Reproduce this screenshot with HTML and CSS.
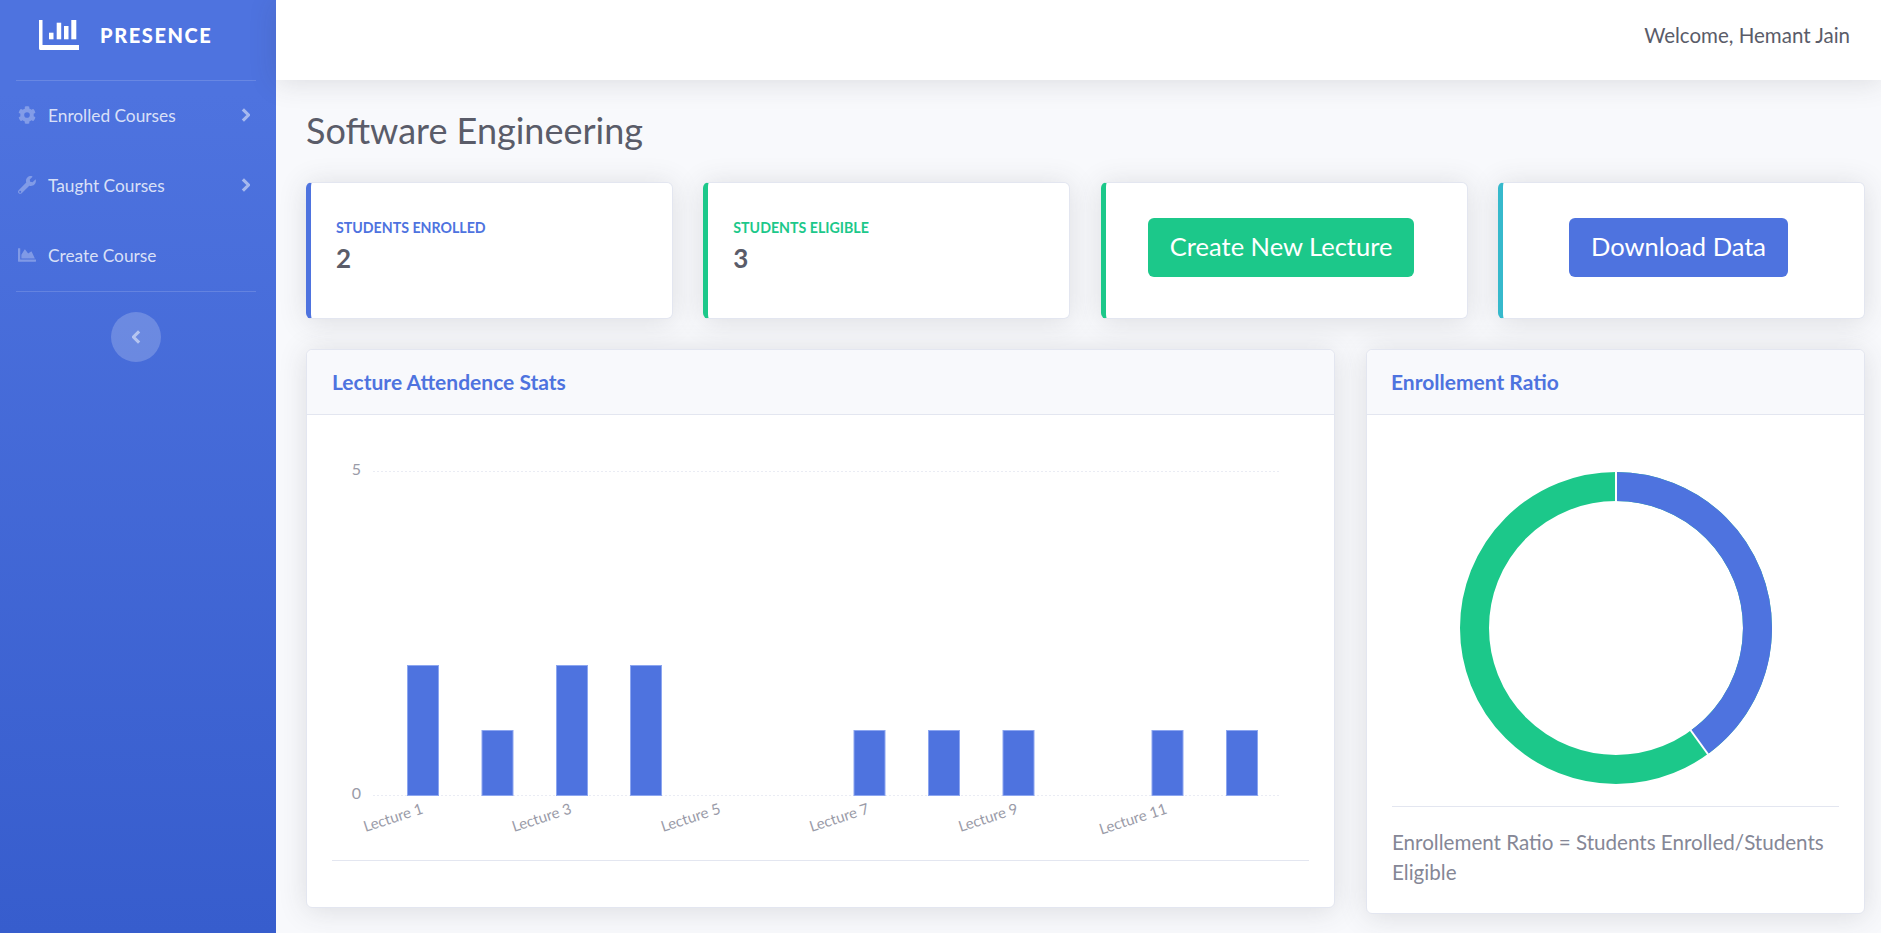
FILE: index.html
```html
<!DOCTYPE html>
<html lang="en">
<head>
    <meta charset="UTF-8">
    <title>Presence - Software Engineering</title>
    <link rel="stylesheet" href="styles.css">
</head>
<body>
<div class="wrapper">
    <aside class="sidebar">
        <a class="brand" href="#">
            <svg class="brand-icon" viewBox="0 0 40 30" width="40" height="30">
                <path fill="#fff" d="M0 0h3.5v25H40v5H1.5Q0 30 0 28.5z"/>
                <rect fill="#fff" x="10" y="12.7" width="4.5" height="6.6"/>
                <rect fill="#fff" x="17.7" y="2.7" width="4.5" height="16.6"/>
                <rect fill="#fff" x="25" y="6" width="4.5" height="13.3"/>
                <rect fill="#fff" x="32.3" y="0" width="5" height="19.3"/>
            </svg>
            <span class="brand-text">Presence</span>
        </a>
        <hr class="side-divider">
        <a class="side-link" href="#">
            <svg class="side-icon" viewBox="0 0 512 512"><path d="M487 316l-42-25c4-23 4-47 0-70l42-25c5-3 7-9 6-14-11-36-30-68-55-95-4-4-10-5-15-2l-42 24c-18-15-38-27-60-35V26c0-6-4-10-9-11-37-8-74-8-110 0-5 1-9 5-9 11v49c-22 8-42 20-60 35L91 86c-5-3-11-2-15 2-25 27-44 59-55 95-2 5 1 11 6 14l42 25c-4 23-4 47 0 70l-42 25c-5 3-7 9-6 14 11 36 30 68 55 95 4 4 10 5 15 2l42-24c18 15 38 27 60 35v49c0 6 4 10 9 11 37 8 74 8 110 0 5-1 9-5 9-11v-49c22-8 42-20 60-35l42 24c5 3 11 2 15-2 25-27 44-59 55-95 2-5-1-11-6-14zM256 336a80 80 0 110-160 80 80 0 010 160z"/></svg>
            <span class="side-label">Enrolled Courses</span>
            <svg class="side-caret" viewBox="0 0 10 16"><path d="M2 1.5L8.5 8 2 14.5" fill="none" stroke="currentColor" stroke-width="3.6"/></svg>
        </a>
        <a class="side-link" href="#">
            <svg class="side-icon" viewBox="0 0 512 512"><path d="M507 109c-2-9-13-12-20-5l-74 74-68-11-11-68 74-74c7-7 4-18-5-20-47-12-99 0-136 37-39 39-50 96-33 145L18 403c-24 24-24 63 0 87s63 24 87 0l216-216c49 17 106 6 145-33 37-37 49-90 41-132zM62 480a30 30 0 110-60 30 30 0 010 60z"/></svg>
            <span class="side-label">Taught Courses</span>
            <svg class="side-caret" viewBox="0 0 10 16"><path d="M2 1.5L8.5 8 2 14.5" fill="none" stroke="currentColor" stroke-width="3.6"/></svg>
        </a>
        <a class="side-link" href="#">
            <svg class="side-icon" viewBox="0 0 512 512"><path d="M500 384c6.6 0 12 5.4 12 12v40c0 6.6-5.4 12-12 12H12c-6.6 0-12-5.4-12-12V76c0-6.6 5.4-12 12-12h40c6.6 0 12 5.4 12 12v308h436zM372.7 159.5L288 216l-85.3-113.7c-5.1-6.8-15.5-6.3-19.9 1L96 248v104h384l-89.9-187.8c-3.2-6.5-11.4-8.7-17.4-4.7z"/></svg>
            <span class="side-label">Create Course</span>
        </a>
        <hr class="side-divider">
        <button class="side-toggle" type="button">
            <svg viewBox="0 0 10 16" width="9" height="14"><path d="M8 1.5L1.5 8 8 14.5" fill="none" stroke="currentColor" stroke-width="3.6"/></svg>
        </button>
    </aside>

    <div class="main">
        <header class="topbar">
            <span class="welcome">Welcome, Hemant Jain</span>
        </header>

        <div class="content">
            <h1 class="page-title">Software Engineering</h1>

            <div class="stat-row">
                <div class="card stat-card border-primary">
                    <div class="stat-label text-primary">Students Enrolled</div>
                    <div class="stat-value">2</div>
                </div>
                <div class="card stat-card border-success">
                    <div class="stat-label text-success">Students Eligible</div>
                    <div class="stat-value">3</div>
                </div>
                <div class="card action-card border-success">
                    <a class="btn btn-success" href="#">Create New Lecture</a>
                </div>
                <div class="card action-card border-info">
                    <a class="btn btn-primary" href="#">Download Data</a>
                </div>
            </div>

            <div class="chart-row">
                <div class="card chart-card">
                    <div class="card-head">Lecture Attendence Stats</div>
                    <div class="card-body">
                        <svg class="bar-chart" viewBox="0 0 1027 444" width="1027" height="444">
                            <g class="grid">
                                <line x1="66" y1="55.5" x2="972" y2="55.5"/>
                                <line x1="66" y1="379.5" x2="972" y2="379.5"/>
                            </g>
                            <g class="y-ticks">
                                <text x="54" y="59">5</text>
                                <text x="54" y="383">0</text>
                            </g>
                            <g class="bars">
                                <rect x="100.5" y="249.5" width="31" height="130"/>
                                <rect x="175" y="314.5" width="31" height="65"/>
                                <rect x="249.5" y="249.5" width="31" height="130"/>
                                <rect x="323.5" y="249.5" width="31" height="130"/>
                                <rect x="547" y="314.5" width="31" height="65"/>
                                <rect x="621.5" y="314.5" width="31" height="65"/>
                                <rect x="696" y="314.5" width="31" height="65"/>
                                <rect x="845" y="314.5" width="31" height="65"/>
                                <rect x="919.5" y="314.5" width="31" height="65"/>
                            </g>
                            <g class="x-ticks">
                                <text transform="translate(117 397) rotate(-18)">Lecture 1</text>
                                <text transform="translate(265.5 397) rotate(-18)">Lecture 3</text>
                                <text transform="translate(414.5 397) rotate(-18)">Lecture 5</text>
                                <text transform="translate(563 397) rotate(-18)">Lecture 7</text>
                                <text transform="translate(712 397) rotate(-18)">Lecture 9</text>
                                <text transform="translate(861 397) rotate(-18)">Lecture 11</text>
                            </g>
                        </svg>
                        <hr class="rule">
                    </div>
                </div>

                <div class="card ratio-card">
                    <div class="card-head">Enrollement Ratio</div>
                    <div class="card-body">
                        <svg class="donut" viewBox="0 0 320 320" width="320" height="320">
                            <circle class="ring-success" cx="160" cy="160" r="141.5" pathLength="100"/>
                            <circle class="ring-primary" cx="160" cy="160" r="141.5" pathLength="100" transform="rotate(-90 160 160)"/>
                            <line class="ring-gap" x1="160" y1="0" x2="160" y2="35"/>
                            <line class="ring-gap" x1="254" y1="289" x2="233" y2="260"/>
                        </svg>
                        <hr class="rule">
                        <p class="ratio-note">Enrollement Ratio = Students Enrolled/Students Eligible</p>
                    </div>
                </div>
            </div>
        </div>
    </div>
</div>
</body>
</html>
```

FILE: styles.css
```css
* {
    box-sizing: border-box;
}
html, body {
    height: 100%;
    margin: 0;
}
body {
    font-family: Lato, "Noto Sans", sans-serif;
    color: #858796;
    background-color: #f8f9fc;
}
a {
    text-decoration: none;
}
.wrapper {
    display: flex;
    height: 933px;
    overflow: hidden;
}

/* sidebar */
.sidebar {
    width: 276px;
    flex-shrink: 0;
    padding: 0 20px 0 16px;
    background: linear-gradient(180deg, #4e73df 10%, #375dcd 100%);
    display: flex;
    flex-direction: column;
}
.brand {
    height: 80px;
    display: flex;
    align-items: center;
    padding: 0 0 11px 23px;
    color: #fff;
}
.brand-icon {
    margin-right: 21px;
}
.brand-text {
    font-size: 20px;
    font-weight: 900;
    letter-spacing: 1.6px;
    text-transform: uppercase;
}
.side-divider {
    margin: 0;
    border: 0;
    border-top: 1px solid rgba(255, 255, 255, 0.15);
}
.side-link {
    height: 70px;
    padding-bottom: 2px;
    display: flex;
    align-items: center;
    color: rgba(255, 255, 255, 0.8);
    font-size: 17.3px;
}
.side-icon {
    width: 18px;
    height: 18px;
    margin-left: 2px;
    margin-right: 12px;
    fill: rgba(255, 255, 255, 0.3);
}
.side-label {
    flex-grow: 1;
}
.side-caret {
    width: 9px;
    height: 14px;
    margin-right: 6px;
    color: rgba(255, 255, 255, 0.5);
}
.side-toggle {
    width: 50px;
    height: 50px;
    margin: 20px 0 0 95px;
    padding: 0;
    border: 0;
    border-radius: 50%;
    color: rgba(255, 255, 255, 0.5);
    background-color: rgba(255, 255, 255, 0.2);
    display: flex;
    align-items: center;
    justify-content: center;
}

/* main column */
.main {
    flex-grow: 1;
    min-width: 0;
}
.topbar {
    height: 80px;
    padding: 0 31px 10px 0;
    display: flex;
    align-items: center;
    justify-content: flex-end;
    background-color: #fff;
    box-shadow: 0 2.4px 28px 0 rgba(58, 59, 69, 0.15);
    position: relative;
}
.welcome {
    font-size: 20.5px;
    color: #5a5c69;
}
.content {
    padding: 0 16px 0 30px;
}
.page-title {
    margin: 0;
    padding-top: 28px;
    height: 102px;
    font-size: 36px;
    line-height: 44px;
    font-weight: 400;
    color: #5a5c69;
}

/* cards */
.card {
    background-color: #fff;
    border: 1px solid #e3e6f0;
    border-radius: 6px;
    box-shadow: 0 2.4px 28px 0 rgba(58, 59, 69, 0.15);
}
.border-primary {
    border-left: 5px solid #4e73df;
}
.border-success {
    border-left: 5px solid #1cc88a;
}
.border-info {
    border-left: 5px solid #36b9cc;
}
.text-primary {
    color: #4e73df;
}
.text-success {
    color: #1cc88a;
}
.stat-row {
    display: grid;
    grid-template-columns: repeat(4, 367px);
    justify-content: space-between;
}
.stat-card,
.action-card {
    height: 137px;
}
.stat-card {
    padding: 36px 25px 0;
}
.stat-label {
    font-size: 14.2px;
    line-height: 18px;
    font-weight: 700;
    text-transform: uppercase;
}
.stat-value {
    margin-top: 6px;
    font-size: 26px;
    line-height: 30px;
    font-weight: 700;
    color: #5a5c69;
}
.action-card {
    display: flex;
    align-items: center;
    justify-content: center;
}
.btn {
    height: 59px;
    margin: 0 10px 7px 0;
    display: flex;
    align-items: center;
    padding: 0 22px 3px;
    border-radius: 6px;
    color: #fff;
    font-size: 25.5px;
}
.btn-success {
    background-color: #1cc88a;
}
.btn-primary {
    background-color: #4e73df;
}

.chart-row {
    margin-top: 30px;
    display: grid;
    grid-template-columns: 1029px 499px;
    justify-content: space-between;
    align-items: start;
}
.card-head {
    height: 65px;
    padding: 0 25px 2px;
    display: flex;
    align-items: center;
    background-color: #f8f9fc;
    border-bottom: 1px solid #e3e6f0;
    border-radius: 6px 6px 0 0;
    color: #4e73df;
    font-size: 21px;
    font-weight: 700;
}
.ratio-card .card-head {
    padding-left: 24px;
}
.chart-card {
    height: 559px;
}
.ratio-card {
    height: 565px;
}
.bar-chart {
    display: block;
    margin-top: 1px;
}
.rule {
    margin: 0 25px;
    border: 0;
    border-top: 1px solid #e3e6f0;
}

/* bar chart */
.grid line {
    stroke: #eaecf4;
    stroke-dasharray: 2 2;
}
.y-ticks text {
    font-size: 16px;
    fill: #9a9ba8;
    text-anchor: end;
}
.bars rect {
    fill: #4e73df;
    stroke: #8ca6f0;
    stroke-width: 1;
}
.x-ticks text {
    font-size: 15px;
    fill: #9a9ba8;
    text-anchor: end;
}

/* donut */
.donut {
    display: block;
    margin: 53px 0 18px 89px;
}
.ring-success,
.ring-primary {
    fill: none;
    stroke-width: 29;
}
.ring-success {
    stroke: #1cc88a;
}
.ring-primary {
    stroke: #4e73df;
    stroke-dasharray: 40 60;
}
.ring-gap {
    stroke: #fff;
    stroke-width: 2;
}
.ratio-note {
    margin: 20px 25px 0;
    font-size: 20.6px;
    line-height: 30px;
}
```
